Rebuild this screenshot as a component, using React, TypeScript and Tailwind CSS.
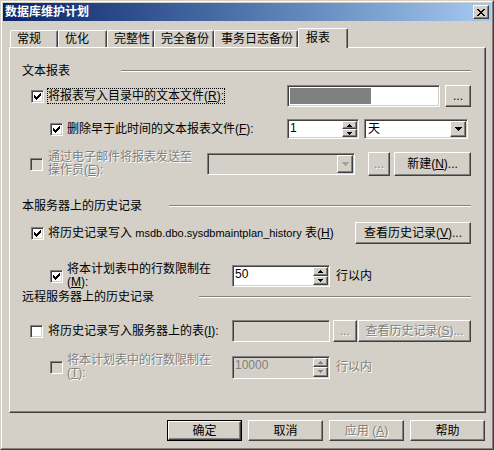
import React from "react";

const raised =
  "border border-t-white border-l-white border-r-[#404040] border-b-[#404040] shadow-[inset_-1px_-1px_0_#808080] bg-[#d4d0c8]";
const sunken =
  "border border-t-[#808080] border-l-[#808080] border-r-white border-b-white shadow-[inset_1px_1px_0_#404040,inset_-1px_-1px_0_#d4d0c8]";
const dimText = "text-[#808080] [text-shadow:1px_1px_0_#ffffff]";

// classic 7x7 check mark: starting row of each 3px column
const CHECK_COLS = [2, 3, 4, 3, 2, 1, 0];

type CheckProps = { checked?: boolean; disabled?: boolean };

function CheckBox({ checked = false, disabled = false }: CheckProps) {
  return (
    <div
      className={`flex h-[13px] w-[13px] shrink-0 items-center justify-center ${sunken} ${
        disabled ? "bg-[#d4d0c8]" : "bg-white"
      }`}
    >
      {checked && (
        <svg width="7" height="7" viewBox="0 0 7 7" shapeRendering="crispEdges">
          {CHECK_COLS.map((y, x) => (
            <rect key={x} x={x} y={y} width="1" height="3" fill="#000" />
          ))}
        </svg>
      )}
    </div>
  );
}

const UpArrow = ({ color = "#000" }: { color?: string }) => (
  <svg width="5" height="3" viewBox="0 0 5 3" shapeRendering="crispEdges">
    <path d="M2 0h1v1h1v1h1v1H0V2h1V1h1z" fill={color} />
  </svg>
);

const DownArrow = ({ color = "#000" }: { color?: string }) => (
  <svg width="5" height="3" viewBox="0 0 5 3" shapeRendering="crispEdges">
    <path d="M0 0h5v1H4v1H3v1H2V2H1V1H0z" fill={color} />
  </svg>
);

const ComboArrow = ({ color = "#000" }: { color?: string }) => (
  <svg width="7" height="4" viewBox="0 0 7 4" shapeRendering="crispEdges">
    <path d="M0 0h7v1H6v1H5v1H4v1H3V3H2V2H1V1H0z" fill={color} />
  </svg>
);

type BtnProps = {
  children: React.ReactNode;
  className?: string;
  disabled?: boolean;
  primary?: boolean;
};

function Button({ children, className = "", disabled = false, primary = false }: BtnProps) {
  const face = (
    <div
      className={`flex h-full w-full items-center justify-center leading-[14px] ${raised} ${
        disabled ? dimText : "text-black"
      }`}
    >
      {children}
    </div>
  );
  if (primary) {
    return <div className={`shrink-0 border border-black ${className}`}>{face}</div>;
  }
  return <div className={`shrink-0 ${className}`}>{face}</div>;
}

function Spinner({ value, className = "", disabled = false }: { value: string; className?: string; disabled?: boolean }) {
  const arrow = disabled ? "#808080" : "#000";
  return (
    <div className={`flex shrink-0 p-[1px] ${sunken} ${disabled ? "bg-[#d4d0c8]" : "bg-white"} ${className}`}>
      <div className={`flex-1 pl-[1px] leading-[15px] ${disabled ? "text-[#808080]" : "text-black"}`}>{value}</div>
      <div className="flex w-[15px] flex-col">
        <div className={`flex flex-1 items-center justify-center ${raised}`}>
          <UpArrow color={arrow} />
        </div>
        <div className={`flex flex-1 items-center justify-center ${raised}`}>
          <DownArrow color={arrow} />
        </div>
      </div>
    </div>
  );
}

function Combo({ value = "", className = "", disabled = false }: { value?: string; className?: string; disabled?: boolean }) {
  return (
    <div className={`flex shrink-0 p-[1px] ${sunken} ${disabled ? "bg-[#d4d0c8]" : "bg-white"} ${className}`}>
      <div className="flex flex-1 items-center pl-[2px] leading-[14px]">{value}</div>
      <div className={`flex w-[16px] items-center justify-center ${raised}`}>
        <ComboArrow color={disabled ? "#a0a0a0" : "#000"} />
      </div>
    </div>
  );
}

function GroupHeading({ title, labelWidth }: { title: string; labelWidth: string }) {
  return (
    <div className="flex h-[14px] items-center">
      <div className={`${labelWidth} shrink-0 leading-[14px]`}>{title}</div>
      <div className="h-[2px] flex-1 border-t border-b border-t-[#808080] border-b-white" />
    </div>
  );
}

const TABS = [
  { label: "常规", w: "w-[48px]" },
  { label: "优化", w: "w-[49px]" },
  { label: "完整性", w: "w-[47px]" },
  { label: "完全备份", w: "w-[60px]" },
  { label: "事务日志备份", w: "w-[84px]" },
];

export default function App() {
  return (
    <div className="h-[450px] w-[494px] border border-t-[#d4d0c8] border-l-[#d4d0c8] border-r-[#404040] border-b-[#404040] bg-[#d4d0c8] font-['Liberation_Sans','Noto_Sans_CJK_SC',sans-serif] text-[12px] text-black">
      <div className="flex h-full flex-col border border-t-white border-l-white border-r-[#808080] border-b-[#808080] p-[1px]">
        {/* title bar */}
        <div className="flex h-[18px] shrink-0 items-center justify-between bg-linear-to-r from-[#0a246a] to-[#a6caf0] pl-[2px] pr-[2px]">
          <span className="text-[12px] font-bold leading-[14px] text-white">数据库维护计划</span>
          <div className={`flex h-[14px] w-[16px] items-center justify-center ${raised}`}>
            <svg width="8" height="7" viewBox="0 0 8 7" shapeRendering="crispEdges">
              <path d="M0 0h2v1h1v1h2V1h1V0h2v1H7v1H6v1H5v1h1v1h1v1h1v1H6V6H5V5H3v1H2v1H0V6h1V5h1V4h1V3H2V2H1V1H0z" fill="#000" />
            </svg>
          </div>
        </div>

        {/* tabs */}
        <div className="ml-[7px] mt-[7px] flex h-[19px] items-end">
          {TABS.map((t) => (
            <div
              key={t.label}
              className={`${t.w} flex h-[17px] shrink-0 items-center rounded-t-[2px] border-t border-l border-r border-t-white border-l-white border-r-[#404040] pl-[6px] leading-[14px] shadow-[inset_-1px_0_0_#808080]`}
            >
              {t.label}
            </div>
          ))}
          <div className="relative z-10 -mb-[1px] flex h-[20px] w-[50px] shrink-0 items-start rounded-t-[2px] border-t border-l border-r border-t-white border-l-white border-r-[#404040] bg-[#d4d0c8] pl-[7px] pt-[2px] leading-[14px] shadow-[inset_-1px_0_0_#808080]">
            报表
          </div>
        </div>

        {/* tab panel */}
        <div className={`ml-[6px] flex h-[366px] w-[477px] shrink-0 flex-col pl-[12px] pr-[14px] pt-[16px] ${raised}`}>
          <GroupHeading title="文本报表" labelWidth="w-[99px]" />

          <div className="mt-[7px] flex h-[22px] items-center">
            <div className="ml-[9px]">
              <CheckBox checked />
            </div>
            <div className="ml-[3px] h-[16px] border border-dotted border-black leading-[14px]">
              将报表写入目录中的文本文件(<u>R</u>):
            </div>
            <div className="flex-1" />
            <div className={`flex h-[22px] w-[153px] p-[1px] ${sunken} bg-white`}>
              <div className="my-[1px] ml-[1px] w-[81px] bg-[#808080]" />
            </div>
            <Button className="ml-[5px] h-[22px] w-[26px]">...</Button>
          </div>

          <div className="mt-[12px] flex h-[20px] items-center">
            <div className="ml-[28px]">
              <CheckBox checked />
            </div>
            <div className="ml-[4px] leading-[14px]">
              删除早于此时间的文本报表文件(<u>F</u>):
            </div>
            <div className="flex-1" />
            <Spinner value="1" className="h-[20px] w-[72px]" />
            <Combo value="天" className="ml-[5px] mr-[3px] h-[20px] w-[104px]" />
          </div>

          <div className="mt-[12px] flex h-[26px] items-center">
            <div className="ml-[8px]">
              <CheckBox disabled />
            </div>
            <div className={`ml-[5px] leading-[13px] ${dimText}`}>
              <div>通过电子邮件将报表发送至</div>
              <div>
                操作员(<u>E</u>):
              </div>
            </div>
            <div className="flex-1" />
            <Combo disabled className="h-[22px] w-[148px]" />
            <Button disabled className="ml-[13px] h-[24px] w-[22px]">
              ...
            </Button>
            <Button className="ml-[4px] h-[24px] w-[77px]">
              新建(<u>N</u>)...
            </Button>
          </div>

          <div className="mt-[22px]">
            <GroupHeading title="本服务器上的历史记录" labelWidth="w-[147px]" />
          </div>

          <div className="mt-[9px] flex h-[22px] items-center">
            <div className="ml-[9px]">
              <CheckBox checked />
            </div>
            <div className="ml-[4px] leading-[14px]">
              将历史记录写入 <span className="text-[11px]">msdb.dbo.sysdbmaintplan_history</span> 表(<u>H</u>)
            </div>
            <div className="flex-1" />
            <Button className="h-[22px] w-[116px]">
              查看历史记录(<u>V</u>)...
            </Button>
          </div>

          <div className="mt-[20px] flex h-[24px] items-center">
            <div className="ml-[28px]">
              <CheckBox checked />
            </div>
            <div className="ml-[4px] w-[161px] shrink-0 leading-[13px]">
              <div>将本计划表中的行数限制在</div>
              <div>
                (<u>M</u>):
              </div>
            </div>
            <Spinner value="50" className="ml-[4px] h-[22px] w-[98px]" />
            <div className="ml-[6px] leading-[14px]">行以内</div>
          </div>

          <div className="mt-[2px]">
            <GroupHeading title="远程服务器上的历史记录" labelWidth="w-[177px]" />
          </div>

          <div className="mt-[16px] flex h-[22px] items-center">
            <div className="ml-[8px]">
              <CheckBox />
            </div>
            <div className="ml-[5px] w-[184px] shrink-0 leading-[14px]">
              将历史记录写入服务器上的表(<u>I</u>):
            </div>
            <div className={`h-[22px] w-[98px] shrink-0 ${sunken} bg-[#d4d0c8]`} />
            <Button disabled className="ml-[3px] h-[22px] w-[24px]">
              ...
            </Button>
            <Button disabled className="ml-[1px] h-[22px] w-[113px]">
              查看历史记录(<u>S</u>)...
            </Button>
          </div>

          <div className="mt-[13px] flex h-[24px] items-center">
            <div className="ml-[28px]">
              <CheckBox disabled />
            </div>
            <div className={`ml-[4px] w-[161px] shrink-0 leading-[13px] ${dimText}`}>
              <div>将本计划表中的行数限制在</div>
              <div>
                (<u>T</u>):
              </div>
            </div>
            <Spinner disabled value="10000" className="ml-[4px] h-[23px] w-[98px]" />
            <div className={`ml-[6px] leading-[14px] ${dimText}`}>行以内</div>
          </div>
        </div>

        {/* dialog buttons */}
        <div className="mt-[7px] flex justify-end gap-[6px] pr-[6px]">
          <Button primary className="h-[21px] w-[75px]">
            确定
          </Button>
          <Button className="h-[21px] w-[75px]">取消</Button>
          <Button disabled className="h-[21px] w-[75px]">
            应用 (<u>A</u>)
          </Button>
          <Button className="h-[21px] w-[75px]">帮助</Button>
        </div>
      </div>
    </div>
  );
}
